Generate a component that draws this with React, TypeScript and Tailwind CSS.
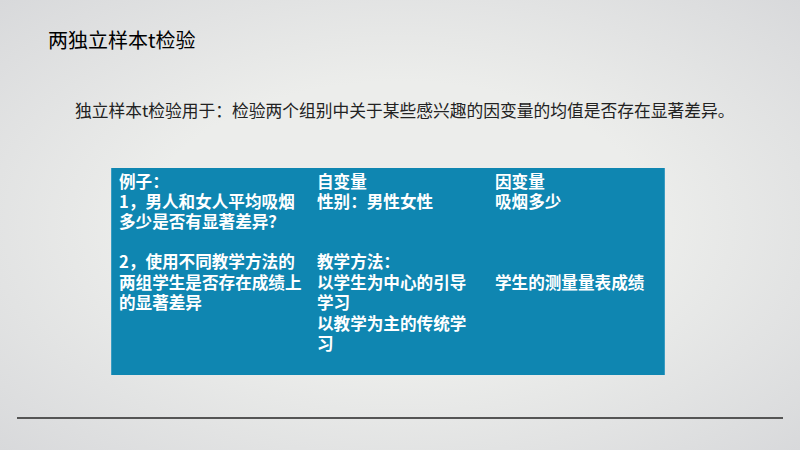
import React from "react";

const col1 = [
    "例子：",
    "1，男人和女人平均吸烟",
    "多少是否有显著差异？",
    "",
    "2，使用不同教学方法的",
    "两组学生是否存在成绩上",
    "的显著差异",
];

const col2 = [
    "自变量",
    "性别：男性女性",
    "",
    "",
    "教学方法：",
    "以学生为中心的引导",
    "学习",
    "以教学为主的传统学",
    "习",
];

const col3 = ["因变量", "吸烟多少", "", "", "", "学生的测量量表成绩"];

function Column({ lines, width }: { lines: string[]; width: string }) {
    return (
        <div className={`${width} flex flex-col`}>
            {lines.map((line, i) => (
                <div
                    key={i}
                    className={`h-[20px] leading-[20px] whitespace-nowrap ${i === 5 || i === 7 ? "mt-[1px]" : ""}`}
                >
                    {line || "\u00a0"}
                </div>
            ))}
        </div>
    );
}

export default function App() {
    return (
        <div
            className="w-[800px] h-[450px] overflow-hidden flex flex-col bg-[radial-gradient(ellipse_at_center,#ecedeb_45%,#d8d9db_100%)]"
            style={{ fontFamily: '"Noto Sans CJK SC", "Noto Sans", sans-serif' }}
        >
            {/* Title */}
            <h1 className="pl-[48px] pt-[26px] text-[20px] leading-[28px] text-black">两独立样本t检验</h1>

            {/* Definition */}
            <p className="pl-[75px] mt-[44px] text-[16.75px] leading-[24px] text-[#222]">
                独立样本t检验用于：检验两个组别中关于某些感兴趣的因变量的均值是否存在显著差异。
            </p>

            {/* Example table */}
            <div className="ml-[111px] mt-[46px] w-[554px] h-[207px] bg-[#0f86b1] border-x border-[#3a9cc2] flex pl-[7px] pt-[3px] text-white text-[16.6px] font-bold">
                <Column lines={col1} width="w-[198px]" />
                <Column lines={col2} width="w-[178px]" />
                <Column lines={col3} width="w-[168px]" />
            </div>

            {/* Bottom rule */}
            <div className="mx-[17px] mt-[42px] h-[2px] bg-[#555]" />
        </div>
    );
}
